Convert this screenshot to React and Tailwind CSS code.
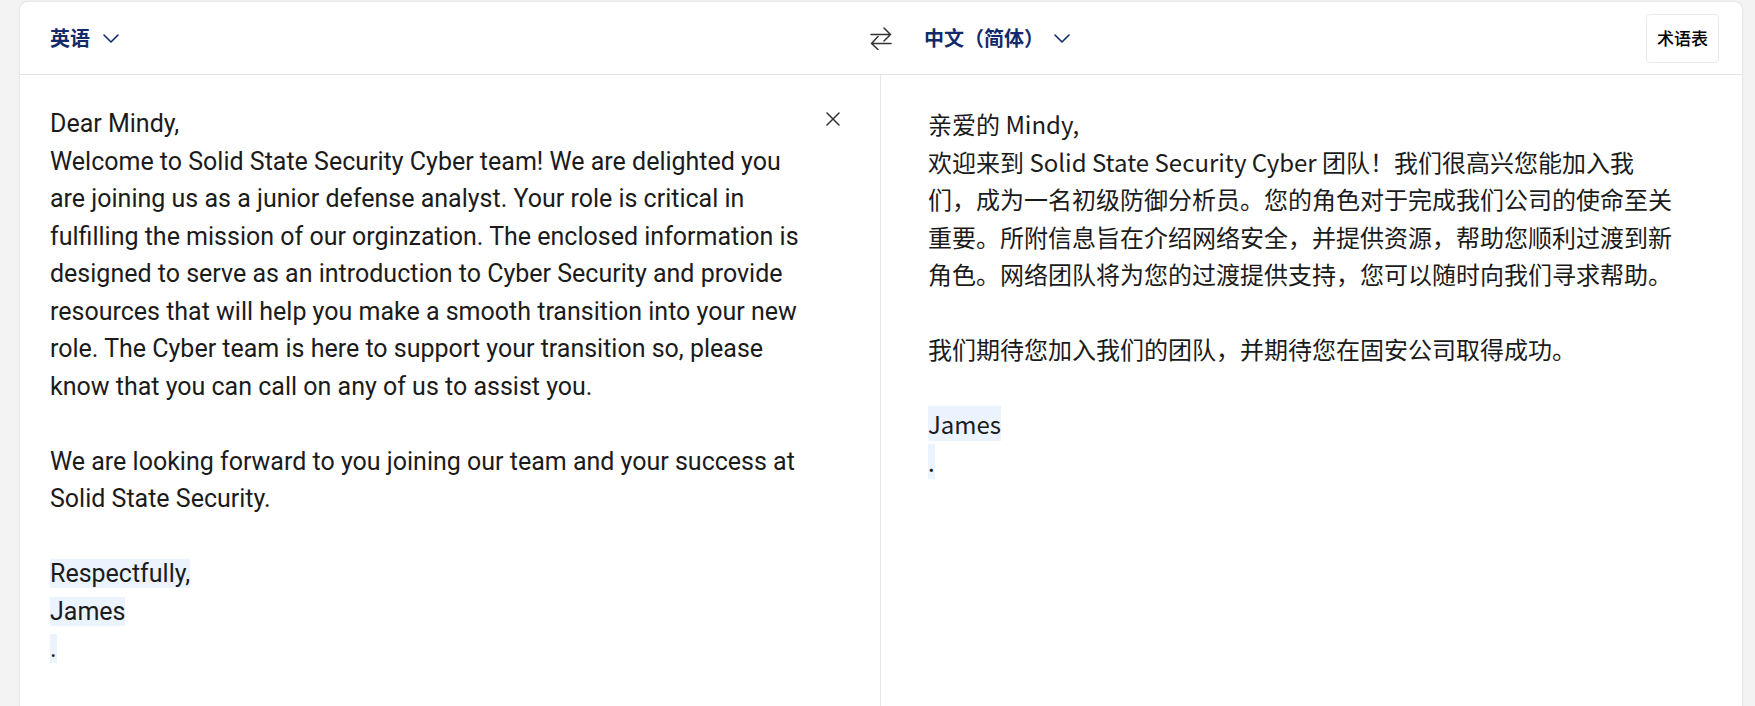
import React from 'react'

const leftLines = [
  { t: 'Dear Mindy,' },
  { t: 'Welcome to Solid State Security Cyber team! We are delighted you' },
  { t: 'are joining us as a junior defense analyst. Your role is critical in' },
  { t: 'fulfilling the mission of our orginzation. The enclosed information is' },
  { t: 'designed to serve as an introduction to Cyber Security and provide' },
  { t: 'resources that will help you make a smooth transition into your new' },
  { t: 'role. The Cyber team is here to support your transition so, please' },
  { t: 'know that you can call on any of us to assist you.' },
  { t: '' },
  { t: 'We are looking forward to you joining our team and your success at' },
  { t: 'Solid State Security.' },
  { t: '' },
  { t: 'Respectfully,', hl: true },
  { t: 'James', hl: true },
  { t: '.', hl: true },
]

const rightLines = [
  { t: '亲爱的 Mindy,' },
  { t: '欢迎来到 Solid State Security Cyber 团队！我们很高兴您能加入我' },
  { t: '们，成为一名初级防御分析员。您的角色对于完成我们公司的使命至关' },
  { t: '重要。所附信息旨在介绍网络安全，并提供资源，帮助您顺利过渡到新' },
  { t: '角色。网络团队将为您的过渡提供支持，您可以随时向我们寻求帮助。' },
  { t: '' },
  { t: '我们期待您加入我们的团队，并期待您在固安公司取得成功。' },
  { t: '' },
  { t: 'James', hl: true },
  { t: '.', hl: true },
]

function Chevron() {
  return (
    <svg width="16" height="9" viewBox="0 0 16 9" fill="none" className="shrink-0">
      <path d="M1 1l7 7 7-7" stroke="#122a6b" strokeWidth="1.6" strokeLinecap="round" strokeLinejoin="round" />
    </svg>
  )
}

function SwapIcon() {
  return (
    <svg width="22" height="23" viewBox="0 0 22 23" fill="none">
      <path d="M1 7.5h19.5M14 1l6.5 6.5L14 14" stroke="#333" strokeWidth="1.5" strokeLinecap="round" strokeLinejoin="round" />
      <path d="M21 16.5H1.5M8 9.5l-6.5 7 6.5 6" stroke="#333" strokeWidth="1.5" strokeLinecap="round" strokeLinejoin="round" />
    </svg>
  )
}

function TextLines({ lines }) {
  return (
    <div>
      {lines.map((l, i) => (
        <div key={i} className="h-[37.5px] leading-[37.5px] whitespace-nowrap">
          {l.t === '' ? '\u00a0' : l.hl ? <span className="bg-[#ebf3fe]">{l.t}</span> : l.t}
        </div>
      ))}
    </div>
  )
}

export default function App() {
  return (
    <div className="h-[706px] overflow-hidden bg-[#f3f3f3] pt-[2px] pl-[20px]">
      <div className="w-[1722px] h-[760px] bg-white rounded-lg shadow-[0_0_3px_rgba(0,0,0,0.12)]">
        {/* Header */}
        <div className="h-[73px] flex items-center border-b border-[#e3e3e3] font-['Noto_Sans_CJK_SC',sans-serif]">
          <div className="w-[860px] flex items-center pl-[30px] gap-[13px]">
            <span className="text-[20px] font-bold text-[#122a6b]">英语</span>
            <Chevron />
          </div>
          <div className="flex-1 flex items-center -ml-[10px] pr-[23px]">
            <SwapIcon />
            <span className="ml-[32px] text-[20px] font-bold text-[#122a6b]">中文（简体）</span>
            <span className="ml-[10px]"><Chevron /></span>
            <button className="ml-auto h-[49px] px-[10px] rounded border border-[#ebebeb] text-[17px] font-medium text-black">
              术语表
            </button>
          </div>
        </div>

        {/* Panes */}
        <div className="flex h-[686px]">
          <div className="w-[860px] flex pl-[30px] pt-[30px] pr-[40px] text-[25px] text-[#1b1b1b] font-['Roboto','Noto_Sans_CJK_SC',sans-serif]">
            <div className="flex-1">
              <TextLines lines={leftLines} />
            </div>
            <button className="mt-[7px] h-[14px] w-[14px] shrink-0">
              <svg width="14" height="14" viewBox="0 0 14 14" fill="none">
                <path d="M1 1l12 12M13 1L1 13" stroke="#333" strokeWidth="1.5" strokeLinecap="round" />
              </svg>
            </button>
          </div>
          <div className="flex-1 border-l border-[#e6e6e6] pl-[47px] pt-[30px] text-[24px] text-[#1b1b1b] font-['Noto_Sans_CJK_SC',sans-serif]">
            <TextLines lines={rightLines} />
          </div>
        </div>
      </div>
    </div>
  )
}
